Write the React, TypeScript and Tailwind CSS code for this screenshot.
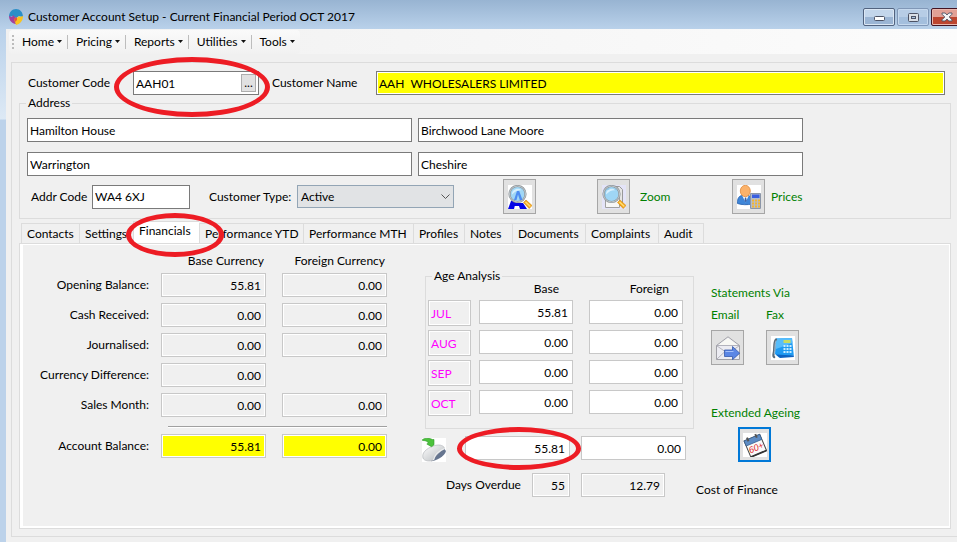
import { ReactNode } from "react";

const menus = ["Home", "Pricing", "Reports", "Utilities", "Tools"];

const tabs = [
  { label: "Contacts", width: "w-[58px]" },
  { label: "Settings", width: "w-[54px]" },
  { label: "Financials", width: "w-[66px]" },
  { label: "Performance YTD", width: "w-[104px]" },
  { label: "Performance MTH", width: "w-[110px]" },
  { label: "Profiles", width: "w-[51px]" },
  { label: "Notes", width: "w-[48px]" },
  { label: "Documents", width: "w-[73px]" },
  { label: "Complaints", width: "w-[73px]" },
  { label: "Audit", width: "w-[45px]" },
];

const balances = [
  { label: "Opening Balance:", base: "55.81", foreign: "0.00" },
  { label: "Cash Received:", base: "0.00", foreign: "0.00" },
  { label: "Journalised:", base: "0.00", foreign: "0.00" },
  { label: "Currency Difference:", base: "0.00", foreign: null },
  { label: "Sales Month:", base: "0.00", foreign: "0.00" },
];

const ages = [
  { month: "JUL", base: "55.81", foreign: "0.00" },
  { month: "AUG", base: "0.00", foreign: "0.00" },
  { month: "SEP", base: "0.00", foreign: "0.00" },
  { month: "OCT", base: "0.00", foreign: "0.00" },
];

const textBox = "h-6 min-w-0 border border-[#7a7a7a] bg-white px-[2px]";

function Amount({ label, value, width, tone, id }: { label?: string; value: string; width: string; tone: string; id?: string }) {
  return (
    <input
      id={id}
      aria-label={label}
      readOnly
      defaultValue={value}
      className={`h-6 shrink-0 border border-[#c8c8c8] pr-1 text-right shadow-[inset_0_0_0_1px_#fff] ${width} ${tone}`}
    />
  );
}

function IconButton({ label, active, children }: { label: string; active?: boolean; children: ReactNode }) {
  return (
    <button
      type="button"
      aria-label={label}
      className={`flex h-[35px] w-[33px] shrink-0 items-center justify-center bg-[#e1e1e1] ${
        active ? "border-2 border-[#0078d7]" : "border border-[#a6a6a6]"
      }`}
    >
      {children}
    </button>
  );
}

// hand-drawn highlight ring, sits over the control it marks
function Ring({ place }: { place: string }) {
  return <span className={`pointer-events-none absolute z-20 rounded-[50%] border-[5px] border-[#ed1c24] ${place}`} />;
}

function Magnifier() {
  return (
    <g>
      <path d="M15.5 17.500l2.500-2.500 6 5.500-2.800 3z" fill="#f5a81c" stroke="#d88a10" strokeWidth=".6" />
      <path d="M17.500 17l4.800 4.400" stroke="#ffe07a" strokeWidth="1.300" />
      <circle cx="9.5" cy="9" r="8" fill="#8fd0f4" fillOpacity=".85" stroke="#8b9297" strokeWidth="2.200" />
      <circle cx="9.5" cy="9" r="8" fill="none" stroke="#c8cfd3" strokeWidth=".9" />
      <path d="M4 9.500c0-3.500 2.600-5.700 5.800-5.700 1.700 0 2.900.6 3.700 1.500-3.900-.3-6.500 1.300-9.500 4.200z" fill="#e2f5ff" fillOpacity=".85" />
    </g>
  );
}

function FindIcon() {
  return (
    <svg width="24" height="24" viewBox="0 0 24 24">
      <path d="M0 0h24v24H0z" fill="#fff" />
      <path d="M0 24l3-8h5l-2 8zM12 24l-1-3H6v-3h9l4 6z" fill="#0505e6" />
      <Magnifier />
      <path d="M6 15l3-9h2.200l3.300 9h-2.700L10 9.500 8.500 15z" fill="#3f80f0" fillOpacity=".85" />
    </svg>
  );
}

function ZoomIcon() {
  return (
    <svg width="24" height="24" viewBox="0 0 24 24">
      <path d="M0 0h24v24H0z" fill="#e4e4f8" />
      <path d="M6.500 1.500h11l3 3v16h-14z" fill="#e6e6e6" stroke="#999" />
      <path d="M3.500 4.500h11l3 3v15h-14z" fill="#f6f6f6" stroke="#a0a0a0" />
      <Magnifier />
    </svg>
  );
}

function PricesIcon() {
  return (
    <svg width="24" height="24" viewBox="0 0 24 24">
      <path d="M0 0h24v24H0z" fill="#fff" />
      <path d="M.5 18.500c-.3-5 1.500-8 5-8h5c3 0 4.500 2 4.500 8.500-4 1-10.500 1-14.500-.5z" fill="#3f86d8" stroke="#245fae" strokeWidth=".8" />
      <path d="M5.500 11l3 6.500 3-6.500z" fill="#fff" />
      <path d="M7.900 12.500h1.300l.5 3-1.200 2-1-2z" fill="#3b62a8" />
      <ellipse cx="8.300" cy="6" rx="5" ry="5.700" fill="#fbb26a" stroke="#e08a3c" strokeWidth=".8" />
      <path d="M13.500 8.500h10v15h-10z" fill="#b4bccb" stroke="#8c96a8" />
      <path d="M15 9.500h7.500v3.500H15z" fill="#3a5fe0" />
      <path d="M15 14.500h2v2h-2zM18 14.500h2v2h-2zM21 14.500h2v2h-2zM15 17.500h2v2h-2zM18 17.500h2v2h-2zM21 17.500h2v2h-2zM15 20.500h2v2h-2zM18 20.500h2v2h-2zM21 20.500h2v2h-2z" fill="#f5b52e" />
    </svg>
  );
}

function EmailIcon() {
  return (
    <svg width="24" height="24" viewBox="0 0 24 24">
      <path d="M.5 9.500L12 .8l11.500 8.700v14H.5z" fill="#ececf2" stroke="#98989f" strokeWidth=".9" />
      <path d="M2.500 9L12 2l9.500 7z" fill="#f8f8f4" />
      <path d="M.8 9.500h22.400M.8 9.800l8.200 5.700M23.200 9.800L15 15.500M1 23l8-7.500" stroke="#a5a5ae" strokeWidth=".8" fill="none" />
      <path d="M8.500 14h8v-3.500l7.200 6.700-7.200 6.500V20.500h-8z" fill="#5b86e5" stroke="#3558ab" strokeWidth=".8" />
      <path d="M9.500 15.500h8" stroke="#a4bffa" />
    </svg>
  );
}

function FaxIcon() {
  return (
    <svg width="24" height="24" viewBox="0 0 24 24">
      <path d="M0 0h24v24H0z" fill="#fff" />
      <path d="M5 2.500L21 2l1.800 17.500L8 21.500 4 18z" fill="#1f9bf2" />
      <path d="M5 2.500L21 2l.4 5L5 13z" fill="#57bdfb" />
      <path d="M5 18.500l17.800 1v1.500L9 22z" fill="#0d62c0" />
      <path d="M12.500 4h7v3h-7z" fill="#c9dc63" />
      <path d="M12.500 9h2v2h-2zM15.500 9h2v2h-2zM18.500 9h2v2h-2zM12.500 12h2v2h-2zM15.500 12h2v2h-2zM18.500 12h2v2h-2zM12.500 15h2v2h-2zM15.500 15h2v2h-2zM18.500 15h2v2h-2z" fill="#c8ecff" />
      <path d="M5 3.500C2.500 6 3.600 12 3 15.500c-.4 2.500-1.500 4.500.2 5.700" stroke="#596a78" strokeWidth="2.200" fill="none" strokeLinecap="round" />
      <path d="M5 4.500C3.500 8 4 14 3.300 18" stroke="#a9c4d8" strokeWidth=".8" fill="none" />
    </svg>
  );
}

function AgeingIcon() {
  return (
    <svg width="24" height="24" viewBox="0 0 24 24">
      <path d="M0 0h24v24H0z" fill="#fff" />
      <g transform="rotate(-23 12 12)">
        <path d="M3.500 4h17v17.500h-17z" fill="#fafafa" stroke="#444" />
        <path d="M3.500 4h17v5.500h-17z" fill="#5d8cc4" stroke="#38618f" strokeWidth=".7" />
        <path d="M3.500 21.500h17" stroke="#333" strokeWidth="1.700" />
        <path d="M7.500 2v4M16.500 2v4" stroke="#555" strokeWidth="2" />
        <text x="12" y="18" textAnchor="middle" fontSize="9" fontStyle="italic" fill="#e02525" fontFamily="Liberation Sans, sans-serif">
          60+
        </text>
      </g>
    </svg>
  );
}

function MouseIcon() {
  return (
    <svg width="24" height="24" viewBox="0 0 24 24" className="shrink-0">
      <defs>
        <linearGradient id="shell" x1="0" y1="0" x2="1" y2="1">
          <stop offset="0" stopColor="#fff" />
          <stop offset="1" stopColor="#b4b8bc" />
        </linearGradient>
      </defs>
      <path d="M0 0h24v24H0z" fill="#fff" />
      <path d="M9 23.300c5-.3 14-5 15-10.300l-2-2.500-6 5-6 5z" fill="#66758f" />
      <path d="M1.500 15C4 10.500 13 6 18.500 7.200c3 .7 4.500 2.300 3.500 4-2.500 1.300-8 4.500-10.500 11-4 1.600-9.500.8-10.500-2.200-.5-1.700-.2-3.500.5-5z" fill="url(#shell)" stroke="#b4b8bb" strokeWidth=".7" />
      <path d="M11.500 22c1-5 5-9 11-11.500" stroke="#eceef0" strokeWidth="1.200" fill="none" />
      <path d="M.5 1.500C4-.5 8 .4 10.500 1.500h1.500v5.300L9.500 8.700 4.800 6l1.700-1C5.500 3.200 3 2.400.5 2.500z" fill="#4cc23c" stroke="#2f9a28" strokeWidth=".6" />
    </svg>
  );
}

function Logo() {
  return (
    <svg width="14" height="16" viewBox="0 0 14 16" className="shrink-0">
      <path d="M0 8C0 3 3 0 7 0s7 3 7 8l-4-1-3 2-3-2z" fill="#2b8fc7" />
      <path d="M0 7l3 1 1-2 2 2 1 1v6c-4-.5-7-3.500-7-8z" fill="#a3429b" />
      <path d="M14 7l-3 1-1-1-2 2-3 1 2 6c4-.8 7-4 7-9z" fill="#f9c420" />
      <path d="M5 10l3-2v3l-2 2z" fill="#e4553f" />
    </svg>
  );
}

function TitleBar() {
  return (
    <header className="flex h-[29px] items-start overflow-hidden bg-linear-to-b from-[#98b4d2] to-[#b9d1ea] pl-[9px]">
      <div className="flex flex-1 items-center gap-[5px] pt-[9px]">
        <Logo />
        <h1>Customer Account Setup - Current Financial Period OCT 2017</h1>
      </div>
      <div className="-mr-[6px] flex gap-[2px] pt-2">
        <button
          type="button"
          aria-label="Minimize"
          className="flex h-[18px] w-8 items-center justify-center rounded-xs border border-[#52637f] bg-linear-to-b from-[#c3d6eb] from-50% to-[#9bb5d4] to-50% shadow-[inset_0_0_0_1px_#dbe7f4]"
        >
          <svg width="11" height="5" viewBox="0 0 11 5" className="mt-[3px]">
            <rect x=".5" y=".5" width="10" height="4" rx="1" fill="#fff" stroke="#4d5365" />
          </svg>
        </button>
        <button
          type="button"
          aria-label="Maximize"
          className="flex h-[18px] w-8 items-center justify-center rounded-xs border border-[#8097b7] bg-linear-to-b from-[#b7cde6] from-50% to-[#a4bfdd] to-50% shadow-[inset_0_0_0_1px_#c6d9ee]"
        >
          <svg width="11" height="9" viewBox="0 0 11 9">
            <rect x=".5" y=".5" width="10" height="8" rx="1" fill="#d8dee6" stroke="#4d5365" />
            <rect x="3.500" y="3.500" width="4" height="2" fill="#a9c3df" stroke="#4d5365" />
          </svg>
        </button>
        <button
          type="button"
          aria-label="Close"
          className="flex h-[18px] w-8 items-center justify-center rounded-xs border border-[#431422] bg-linear-to-b from-[#e2a095] from-50% to-[#bd452f] to-50% shadow-[inset_0_0_0_1px_#e9b7ae]"
        >
          <svg width="12" height="10" viewBox="0 0 12 10">
            <path d="M1 1h3.200L6 3l1.800-2H11v1.200L8.200 5 11 7.800V9H7.800L6 7 4.200 9H1V7.800L3.800 5 1 2.200z" fill="#f4f4f4" stroke="#4d5365" strokeWidth=".9" />
          </svg>
        </button>
      </div>
    </header>
  );
}

function Toolbar() {
  return (
    <nav className="flex h-[25px] items-center bg-linear-to-r from-[#f0f0f0] to-[#fcfcfc] pl-[3px]">
      <div className="flex h-6 items-center rounded-sm bg-linear-to-b from-[#fafafa] to-[#f1f1f1] pl-[3px]">
        <span className="h-[14px] w-[2px] bg-[repeating-linear-gradient(to_bottom,#bcbcbc_0_2px,transparent_2px_4px)]" />
        {menus.map((m, i) => (
          <button
            key={m}
            type="button"
            className={`flex h-[14px] items-center gap-[3px] pr-[5px] pl-2 ${i > 0 ? "border-l border-[#bdbdbd]" : ""}`}
          >
            {m}
            <svg width="5" height="3" viewBox="0 0 5 3">
              <path d="M0 0h5L2.500 3z" fill="#111" />
            </svg>
          </button>
        ))}
      </div>
    </nav>
  );
}

function Address() {
  return (
    <fieldset className="border border-[#dcdcdc] pb-1 pl-[7px]">
      <legend className="-ml-[1px] px-[2px]">Address</legend>
      <div className="grid max-w-[776px] grid-cols-2 gap-x-[6px] gap-y-[10px] pt-[7px]">
        <input aria-label="Address line 1" defaultValue="Hamilton House" className={textBox} />
        <input aria-label="Address line 2" defaultValue="Birchwood Lane Moore" className={textBox} />
        <input aria-label="Address line 3" defaultValue="Warrington" className={textBox} />
        <input aria-label="Address line 4" defaultValue="Cheshire" className={textBox} />
      </div>
      <div className="mt-[3px] flex items-center">
        <label htmlFor="addr-code" className="w-[65px] pl-1">Addr Code</label>
        <input id="addr-code" defaultValue="WA4 6XJ" className={`${textBox} w-[98px]`} />
        <label htmlFor="customer-type" className="ml-[19px] w-[88px] whitespace-nowrap">Customer Type:</label>
        <div className="relative w-[157px]">
          <select
            id="customer-type"
            defaultValue="Active"
            className="h-[23px] w-full appearance-none border border-[#93a5b5] bg-[#e1e3e5] pl-[3px]"
          >
            <option>Active</option>
          </select>
          <svg width="9" height="5" viewBox="0 0 9 5" className="pointer-events-none absolute top-[9px] right-1">
            <path d="M.5.5l4 4 4-4" fill="none" stroke="#555" />
          </svg>
        </div>
        <div className="ml-[49px] flex w-[94px]">
          <IconButton label="Find">
            <FindIcon />
          </IconButton>
        </div>
        <div className="flex w-[135px] items-center gap-[10px] text-[#008000]">
          <IconButton label="Zoom">
            <ZoomIcon />
          </IconButton>
          Zoom
        </div>
        <div className="flex items-center gap-[6px] text-[#008000]">
          <IconButton label="Prices">
            <PricesIcon />
          </IconButton>
          Prices
        </div>
      </div>
    </fieldset>
  );
}

function TabStrip() {
  return (
    <div role="tablist" className="mt-[1px] flex h-[23px] items-end pl-[2px]">
      {tabs.map((t) => {
        const selected = t.label === "Financials";
        return (
          <div key={t.label} className={`relative shrink-0 ${t.width}`}>
            <button
              type="button"
              role="tab"
              aria-selected={selected}
              className={`w-full border-t border-l border-[#dcdcdc] pl-[5px] text-left whitespace-nowrap ${
                selected ? "h-[22px] bg-white pb-1" : "h-5"
              }`}
            >
              {t.label}
            </button>
            {selected && <Ring place="-top-2 -left-[7px] h-11 w-[98px]" />}
          </div>
        );
      })}
      <span className="h-5 border-l border-[#dcdcdc]" />
    </div>
  );
}

function Balances() {
  return (
    <section className="shrink-0 pt-2">
      <div className="flex pb-1 text-right">
        <span className="ml-[138px] w-[105px] pr-[2px]">Base Currency</span>
        <span className="ml-4 w-[105px] pr-[2px]">Foreign Currency</span>
      </div>
      <div className="flex flex-col gap-[6px]">
        {balances.map((b) => (
          <div key={b.label} className="flex items-center">
            <label htmlFor={b.label} className="mr-3 w-[126px] text-right">{b.label}</label>
            <Amount id={b.label} value={b.base} width="w-[105px]" tone="bg-[#f0f0f0]" />
            {b.foreign && (
              <div className="pl-4">
                <Amount label={`${b.label} foreign`} value={b.foreign} width="w-[105px]" tone="bg-[#f0f0f0]" />
              </div>
            )}
          </div>
        ))}
      </div>
      <hr className="mt-[9px] mb-[6px] ml-[145px] h-[2px] border-t border-b border-t-[#a0a0a0] border-b-white" />
      <div className="flex items-center">
        <label htmlFor="balance" className="mr-3 w-[126px] text-right">Account Balance:</label>
        <Amount id="balance" value="55.81" width="w-[105px]" tone="bg-[#ffff00]" />
        <div className="pl-4">
          <Amount label="Account balance foreign" value="0.00" width="w-[105px]" tone="bg-[#ffff00]" />
        </div>
      </div>
    </section>
  );
}

function AgeAnalysis() {
  return (
    <section className="ml-[35px] shrink-0 pt-[23px]">
      <fieldset className="ml-[3px] border border-[#dcdcdc] pr-[10px] pb-3 pl-[2px]">
        <legend className="ml-1 px-[2px]">Age Analysis</legend>
        <div className="-mt-[3px] mb-[3px] flex text-right">
          <span className="ml-[51px] w-[94px] pr-[14px]">Base</span>
          <span className="ml-4 w-[94px] pr-[14px]">Foreign</span>
        </div>
        <div className="flex flex-col gap-1">
          {ages.map((a) => (
            <div key={a.month} className="flex items-start">
              <input
                aria-label="Month"
                readOnly
                defaultValue={a.month}
                className="mr-2 h-[26px] w-[43px] border border-[#c8c8c8] bg-[#f0f0f0] pl-[2px] text-[#ff00ff] shadow-[inset_0_0_0_1px_#fff]"
              />
              <Amount label={`${a.month} base`} value={a.base} width="w-[94px]" tone="bg-white" />
              <div className="pl-4">
                <Amount label={`${a.month} foreign`} value={a.foreign} width="w-[94px]" tone="bg-white" />
              </div>
            </div>
          ))}
        </div>
      </fieldset>
      <div className="mt-[7px] flex h-[26px] items-start">
        <div className="w-[43px] pt-[2px]">
          <MouseIcon />
        </div>
        <div className="relative mr-[11px]">
          <Amount label="Total base" value="55.81" width="w-[105px]" tone="bg-white" />
          <Ring place="-top-[9px] -left-2 h-[43px] w-[124px]" />
        </div>
        <Amount label="Total foreign" value="0.00" width="w-[105px]" tone="bg-white" />
      </div>
      <div className="mt-[11px] flex items-center pl-6">
        <label htmlFor="overdue" className="w-[86px]">Days Overdue</label>
        <Amount id="overdue" value="55" width="w-[38px]" tone="bg-[#f0f0f0]" />
        <div className="pl-[11px]">
          <Amount id="finance" value="12.79" width="w-[84px]" tone="bg-[#f0f0f0]" />
        </div>
      </div>
    </section>
  );
}

function Actions() {
  return (
    <section className="ml-[2px] flex flex-col items-start pt-10 text-[#008000]">
      <div className="pl-[15px]">
        <p>Statements Via</p>
        <div className="mt-[6px] flex gap-[22px]">
          <div className="flex flex-col gap-[7px]">
            Email
            <IconButton label="Email statement">
              <EmailIcon />
            </IconButton>
          </div>
          <div className="flex flex-col gap-[7px]">
            Fax
            <IconButton label="Fax statement">
              <FaxIcon />
            </IconButton>
          </div>
        </div>
        <p className="mt-10 mb-[6px]">Extended Ageing</p>
        <div className="pl-[27px]">
          <IconButton label="Extended ageing" active>
            <AgeingIcon />
          </IconButton>
        </div>
      </div>
      <label htmlFor="finance" className="mt-5 text-black">Cost of Finance</label>
    </section>
  );
}

export default function App() {
  return (
    <div className="flex min-h-screen flex-col overflow-hidden bg-[#f0f0f0] font-[Lato,'Open_Sans',sans-serif] text-[12px] leading-4 text-black">
      <TitleBar />
      <div className="flex flex-1">
        <div className="w-[6px] shrink-0 bg-[linear-gradient(to_bottom,#b9d1ea_0,#dde9f5_90px,#bcd2ea_91px)]" />
        <main className="min-w-0 flex-1">
          <Toolbar />
          <div className="mt-2 ml-[5px] border-y border-l border-[#dcdcdc] pt-2 pr-[6px] pb-[7px] pl-[7px]">
            <div className="flex items-center pr-[6px] pl-[9px]">
              <label htmlFor="code" className="w-[105px]">Customer Code</label>
              <div className="relative flex w-[126px] items-center">
                <input id="code" defaultValue="AAH01" className={`${textBox} w-full`} />
                <button
                  type="button"
                  aria-label="Browse customers"
                  className="absolute top-[3px] right-[3px] h-[18px] w-[15px] border border-[#adadad] bg-[#e1e1e1] leading-3"
                >
                  ...
                </button>
                <Ring place="-top-[14px] -left-[19px] h-[60px] w-[156px]" />
              </div>
              <label htmlFor="name" className="ml-[13px] w-[104px]">Customer Name</label>
              <input
                id="name"
                defaultValue="AAH  WHOLESALERS LIMITED"
                className="h-6 min-w-0 flex-1 border border-[#7a7a7a] bg-[#ffff00] px-[2px] shadow-[inset_0_0_0_1px_#fff]"
              />
            </div>
            <Address />
            <TabStrip />
            <div role="tabpanel" className="border border-[#dcdcdc]">
              <div className="flex items-start border-t border-r border-b-2 border-l-[3px] border-white pb-7">
                <Balances />
                <AgeAnalysis />
                <Actions />
              </div>
            </div>
          </div>
        </main>
      </div>
    </div>
  );
}
